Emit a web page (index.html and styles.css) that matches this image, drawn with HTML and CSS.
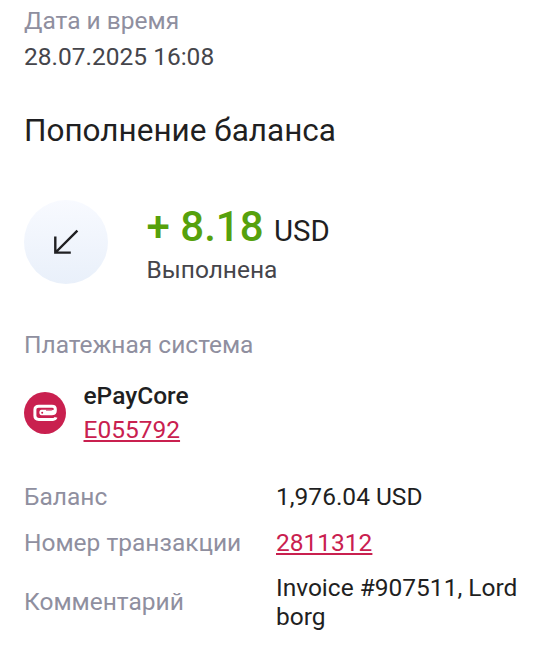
FILE: index.html
```html
<!DOCTYPE html>
<html lang="ru">
<head>
  <meta charset="UTF-8" />
  <meta name="viewport" content="width=device-width, initial-scale=1.0"/>
  <title>Пополнение баланса</title>
  <link rel="stylesheet" href="styles.css">
</head>
<body>

  <div class="details">
    <div class="date">
      <div class="label">Дата и время</div>
      <div class="date-value">28.07.2025 16:08</div>
    </div>

    <h1>Пополнение баланса</h1>

    <div class="operation">
      <div class="operation-icon">
        <svg width="28" height="28" viewBox="0 0 28 28" fill="none" stroke="#1f1f22" stroke-width="2.4">
          <path d="M25.4 2.6 3.5 24.5M3.3 8.5V24.6H18.8" />
        </svg>
      </div>
      <div>
        <div class="amount">+ 8.18 <span class="currency">USD</span></div>
        <div class="status">Выполнена</div>
      </div>
    </div>

    <div class="label">Платежная система</div>
    <div class="system">
      <svg class="system-logo" width="42" height="42" viewBox="0 0 42 42" fill="none">
        <circle cx="21" cy="21" r="21" fill="#c9204f" />
        <path d="M32 25.4C31.6 26.6 30.4 27.4 29 27.4H14.8C12.2 27.4 10.9 26.1 10.9 23.8V17.8C10.9 15.4 12.2 14.2 14.8 14.2H28C30.3 14.2 31.3 15.2 31.3 17V18.6C31.3 20.6 30.3 21.6 28.3 21.6" stroke="#fff" stroke-width="3" />
        <path d="M17.5 17.8H31V20.5C31 22.3 30 23.2 28 23.2H17.5C16.1 23.2 15.4 22.4 15.4 20.5S16.1 17.8 17.5 17.8Z" fill="#fff" />
        <circle cx="18.2" cy="20.7" r="1" fill="#c9204f" />
        <path d="M22 18.2H27.2C28.2 18.2 28.7 17.8 28.8 17" stroke="#c9204f" stroke-width="0.8" />
      </svg>
      <div>
        <div class="system-name">ePayCore</div>
        <a href="#">E055792</a>
      </div>
    </div>

    <div class="info">
      <div class="label">Баланс</div>
      <div>1,976.04 USD</div>
      <div class="label">Номер транзакции</div>
      <div><a href="#">2811312</a></div>
      <div class="label">Комментарий</div>
      <div>Invoice #907511, Lord borg</div>
    </div>
  </div>

</body>
</html>
```

FILE: styles.css
```css
body {
  margin: 0;
  background: #fff;
  color: #1f1f22;
  font-family: Roboto, sans-serif;
  font-size: 24.5px;
  line-height: 29px;
}
.details {
  padding: 6px 24px 0;
}
.label {
  color: #8f8f9f;
}
.date-value {
  margin-top: 7px;
  color: #45454b;
}
h1 {
  margin: 41px 0 51px;
  font-size: 31.5px;
  font-weight: 400;
  line-height: 37px;
}
.operation {
  display: flex;
  align-items: flex-end;
  gap: 38.5px;
  margin-bottom: 46px;
}
.operation-icon {
  display: flex;
  align-items: center;
  justify-content: center;
  width: 84px;
  height: 84px;
  border-radius: 50%;
  background: linear-gradient(#f8faff, #e9f0fa);
}
.amount {
  color: #56a10c;
  font-size: 42px;
  font-weight: 500;
  line-height: 49px;
}
.currency {
  color: #1f1f22;
  font-size: 29.4px;
  font-weight: 400;
  line-height: 1;
}
.status {
  margin-top: 4px;
  color: #45454b;
}
.system {
  display: flex;
  align-items: center;
  gap: 17.5px;
  margin: 22px 0 38.2px;
}
.system-name {
  margin-bottom: 5px;
  font-weight: 500;
}
a {
  color: #c9204f;
  text-decoration-thickness: 2px;
  text-underline-offset: 2px;
}
.info {
  display: grid;
  grid-template-columns: 252px 1fr;
  align-items: center;
  row-gap: 16.35px;
}
```
